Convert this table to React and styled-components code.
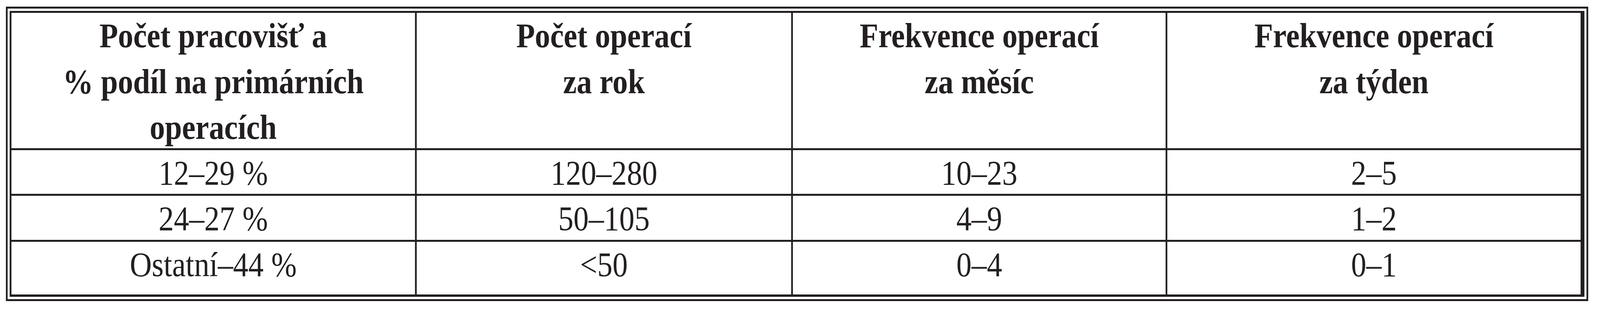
import React, { useEffect, useState } from "react";
import styled, { createGlobalStyle } from "styled-components";

const GlobalStyle = createGlobalStyle`
  html, body {
    margin: 0;
    padding: 0;
    overflow: hidden;
    background: #ffffff;
  }
  body {
    font-family: "Liberation Serif", "Times New Roman", serif;
    color: #231f20;
  }
`;

const ink = "#231f20";
const DESIGN_W = 4615;

// plocha v rozměrech předlohy, na šířku okna se přizpůsobí přes scaleX
const Stage = styled.div`
  box-sizing: border-box;
  width: ${DESIGN_W}px;
  height: 800px;
  padding: 17px 0 0 17px;
  transform-origin: 0 0;
`;

// vnější rámeček kolem celé tabulky
const Frame = styled.div`
  box-sizing: border-box;
  width: 4564px;
  height: 755px;
  padding: 6px;
  border: 5px solid ${ink};
  background: #ffffff;
`;

const Grid = styled.div`
  box-sizing: border-box;
  width: 100%;
  height: 100%;
  border: 5px solid ${ink};
  background: ${ink};
  display: grid;
  grid-template-columns: 1164px 1080px 1075px 1192px;
  grid-template-rows: 347px 112px 113px 135px;
  gap: 5px;
`;

const Cell = styled.div`
  background: #ffffff;
  text-align: center;
  font-size: 88px;
  line-height: 117.5px;
  font-weight: ${(p) => (p.$head ? 700 : 400)};
  white-space: nowrap;
`;

const headers = [
  ["Počet pracovišť a", "% podíl na primárních", "operacích"],
  ["Počet operací", "za rok"],
  ["Frekvence operací", "za měsíc"],
  ["Frekvence operací", "za týden"],
];

const rows = [
  ["12–29 %", "120–280", "10–23", "2–5"],
  ["24–27 %", "50–105", "4–9", "1–2"],
  ["Ostatní–44 %", "<50", "0–4", "0–1"],
];

const getScale = () =>
  typeof window === "undefined" ? 1 : window.innerWidth / DESIGN_W;

const App = () => {
  const [sx, setSx] = useState(getScale);

  useEffect(() => {
    const onResize = () => setSx(getScale());
    window.addEventListener("resize", onResize);
    return () => window.removeEventListener("resize", onResize);
  }, []);

  return (
    <>
      <GlobalStyle />
      <Stage style={{ transform: `scaleX(${sx})` }}>
        <Frame>
          <Grid>
            {headers.map((lines, i) => (
              <Cell $head key={"h" + i}>
                {lines.map((l, j) => (
                  <React.Fragment key={j}>
                    {l}
                    {j < lines.length - 1 && <br />}
                  </React.Fragment>
                ))}
              </Cell>
            ))}
            {rows.map((row, r) =>
              row.map((val, c) => <Cell key={r + "-" + c}>{val}</Cell>)
            )}
          </Grid>
        </Frame>
      </Stage>
    </>
  );
};

export default App;
